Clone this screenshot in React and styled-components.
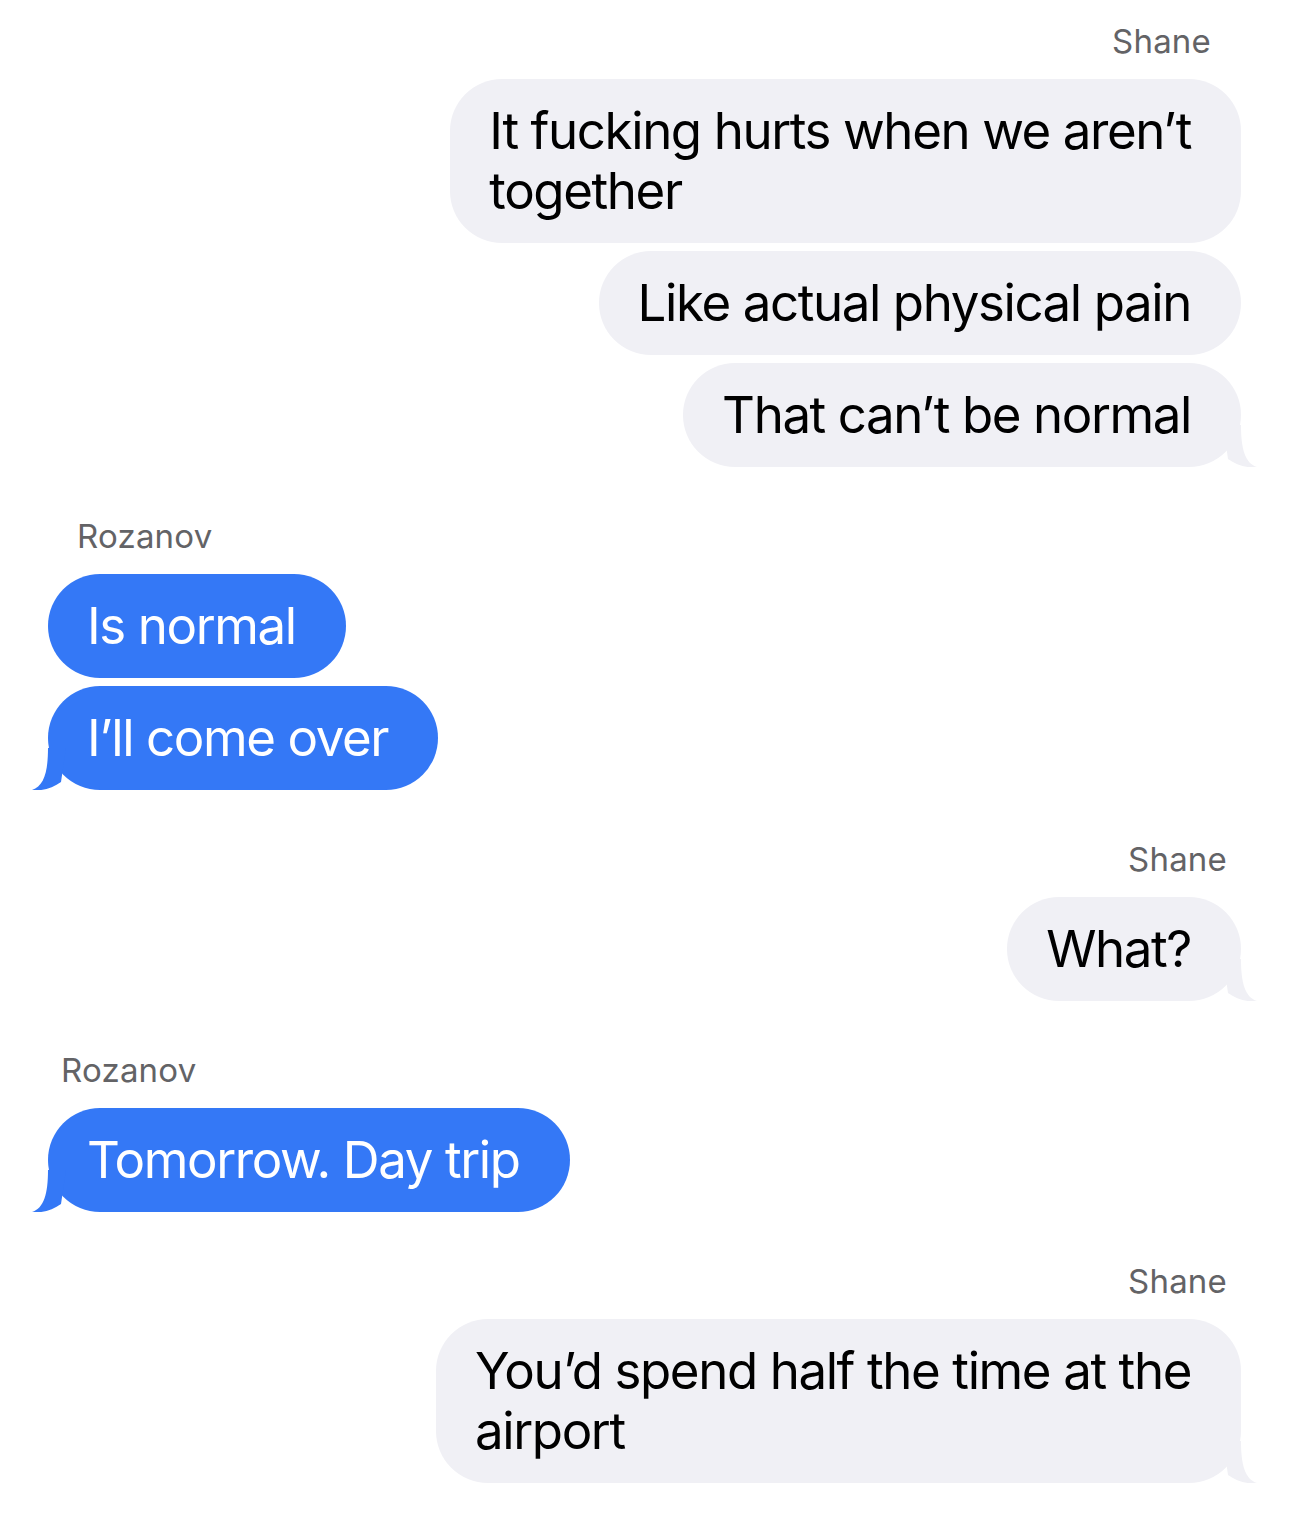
import React from "react";
import styled, { createGlobalStyle } from "styled-components";

const GlobalStyle = createGlobalStyle`
  html, body {
    margin: 0;
    padding: 0;
    background: #ffffff;
  }
  body {
    font-family: "Inter", "Noto Sans", "Liberation Sans", sans-serif;
    -webkit-font-smoothing: antialiased;
  }
`;

const messages = [
  {
    from: "Shane",
    mine: true,
    inset: 79,
    bubbles: [
      ["It fucking hurts when we aren\u2019t", "together"],
      ["Like actual physical pain"],
      ["That can\u2019t be normal"],
    ],
  },
  {
    from: "Rozanov",
    mine: false,
    inset: 77,
    bubbles: [["Is normal"], ["I\u2019ll come over"]],
  },
  {
    from: "Shane",
    mine: true,
    inset: 63,
    bubbles: [["What?"]],
  },
  {
    from: "Rozanov",
    mine: false,
    inset: 61,
    bubbles: [["Tomorrow. Day trip"]],
  },
  {
    from: "Shane",
    mine: true,
    inset: 63,
    bubbles: [["You\u2019d spend half the time at the", "airport"]],
  },
];

function Tail({ mine }) {
  return (
    <TailSvg $mine={mine} viewBox="0 0 36 46" width="36" height="46">
      <path d="M20 4 C20 28 24 42 36 46 C27 47.5 15 44 7 38 L2 4 Z" />
    </TailSvg>
  );
}

function Thread() {
  return (
    <Page>
      {messages.map((group, gi) => (
        <Group key={gi} $mine={group.mine}>
          <Sender $mine={group.mine} $inset={group.inset}>
            {group.from}
          </Sender>
          <Stack $mine={group.mine}>
            {group.bubbles.map((lines, bi) => {
              const last = bi === group.bubbles.length - 1;
              return (
                <Bubble key={bi} $mine={group.mine}>
                  {lines.map((line, li) => (
                    <Line key={li}>{line}</Line>
                  ))}
                  {last && <Tail mine={group.mine} />}
                </Bubble>
              );
            })}
          </Stack>
        </Group>
      ))}
    </Page>
  );
}

export default function App() {
  return (
    <>
      <GlobalStyle />
      <Thread />
    </>
  );
}

const Page = styled.div`
  width: 1290px;
  min-height: 1523px;
  box-sizing: border-box;
  padding: 21px 0 0;
  display: flex;
  flex-direction: column;
  gap: 49px;
  background: #ffffff;
`;

const Group = styled.section`
  display: flex;
  flex-direction: column;
  align-items: ${(p) => (p.$mine ? "flex-end" : "flex-start")};
`;

const Sender = styled.div`
  font-size: 33px;
  line-height: 40px;
  color: #636366;
  letter-spacing: 0.2px;
  margin-bottom: 18px;
  ${(p) =>
    p.$mine ? `margin-right: ${p.$inset}px;` : `margin-left: ${p.$inset}px;`}
`;

const Stack = styled.div`
  display: flex;
  flex-direction: column;
  align-items: ${(p) => (p.$mine ? "flex-end" : "flex-start")};
  gap: 8px;
  ${(p) => (p.$mine ? "margin-right: 49px;" : "margin-left: 48px;")}
`;

const Bubble = styled.div`
  position: relative;
  box-sizing: border-box;
  padding: 22px 50px 22px 39px;
  border-radius: 52px;
  background: ${(p) => (p.$mine ? "#f0f0f5" : "#3478f6")};
  color: ${(p) => (p.$mine ? "#000000" : "#ffffff")};
  font-size: 51px;
  line-height: 60px;
  letter-spacing: -1.4px;
`;

const Line = styled.div`
  white-space: nowrap;
`;

const TailSvg = styled.svg`
  position: absolute;
  bottom: 0;
  ${(p) =>
    p.$mine ? "right: -16px;" : "left: -16px; transform: scaleX(-1);"}
  fill: ${(p) => (p.$mine ? "#f0f0f5" : "#3478f6")};
`;
